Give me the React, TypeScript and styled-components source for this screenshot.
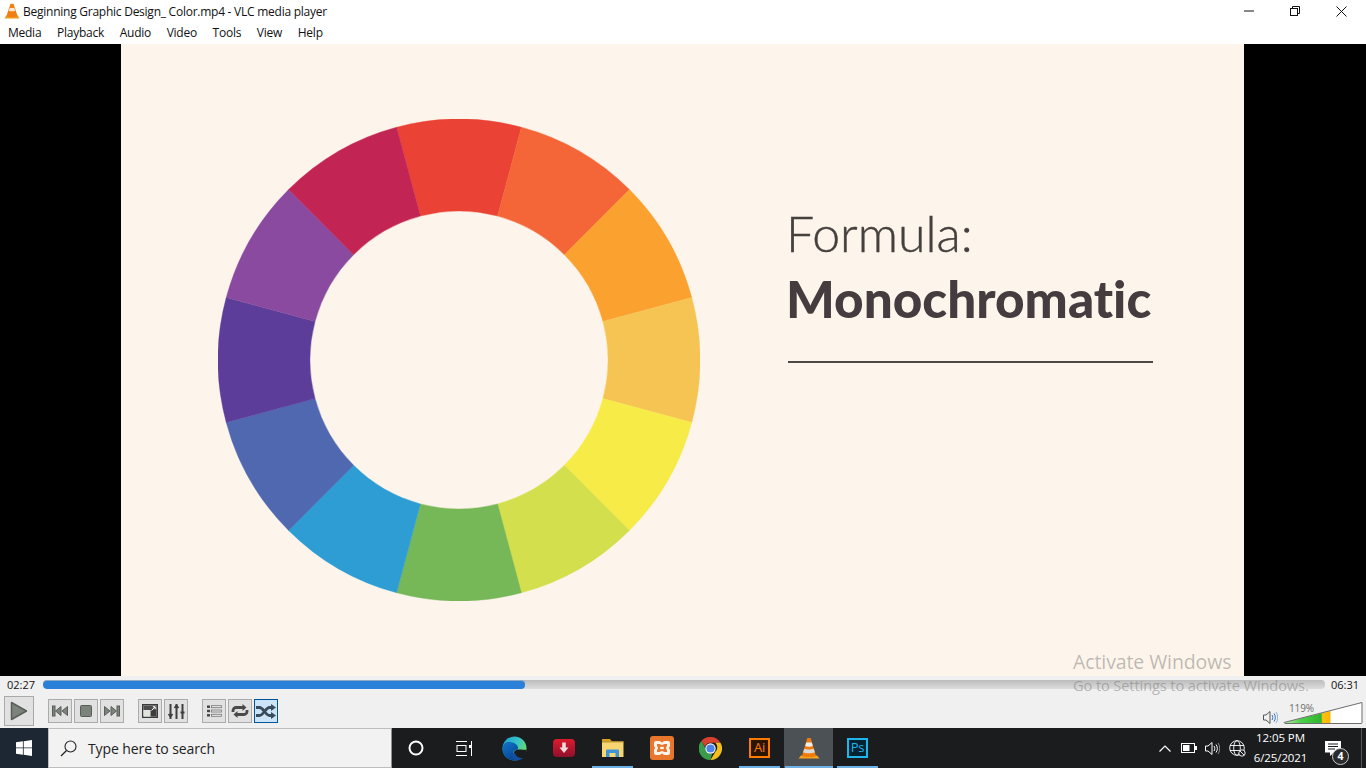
import React from 'react'
import styled, { createGlobalStyle } from 'styled-components'

const GlobalStyle = createGlobalStyle`
  html, body { margin: 0; padding: 0; background: #000; }
  * { box-sizing: border-box; }
  body { font-family: "Open Sans", "Liberation Sans", sans-serif; }
`

const Application = styled.div`
  position: relative;
  width: 1366px;
  height: 768px;
  display: flex;
  flex-direction: column;
  overflow: hidden;
`

const TitleBar = styled.div`
  height: 22px;
  background: #fff;
  display: flex;
  align-items: center;
  padding: 0 2px 0 4px;
  font-size: 12px;
  color: #111;
`
const TitleText = styled.span`
  margin-left: 3px;
  letter-spacing: -0.25px;
  white-space: nowrap;
  flex: 1;
`
const WinButton = styled.div`
  width: 46px;
  height: 22px;
  display: flex;
  align-items: center;
  justify-content: center;
`
const MenuBar = styled.div`
  height: 22px;
  background: #fff;
  display: flex;
  align-items: center;
  gap: 15.7px;
  padding: 0 0 2px 8px;
  font-size: 12px;
  color: #111;
  letter-spacing: -0.25px;
`

const Video = styled.div`
  height: 632px;
  background: #000;
  display: flex;
  padding-left: 121px;
`
const Slide = styled.div`
  width: 1123px;
  background: #fdf5eb;
  display: flex;
  align-items: center;
  padding-left: 97px;
`
const SlideText = styled.div`
  margin-left: 86px;
  width: 366px;
  align-self: flex-start;
  padding-top: 159px;
  font-family: Lato, sans-serif;
  font-variant-ligatures: none;
  color: #48413f;
`
const FormulaLine = styled.div`
  font-size: 50px;
  font-weight: 300;
  line-height: 60px;
  color: #45403e;
  -webkit-text-stroke: 0.4px #45403e;
`
const BoldLine = styled.div`
  font-size: 51.3px;
  font-weight: 900;
  line-height: 62px;
  margin-top: 4px;
  color: #443c3e;
  white-space: nowrap;
`
const Rule = styled.div`
  height: 2px;
  margin: 32px 0 0 2px;
  width: 365px;
  background: #4b4845;
`

const Watermark = styled.div`
  position: absolute;
  left: 1073px;
  top: 649px;
  color: rgba(110, 110, 110, 0.45);
  pointer-events: none;
`
const WatermarkTitle = styled.div`
  font-size: 19.5px;
  line-height: 26px;
  letter-spacing: -0.1px;
`
const WatermarkSub = styled.div`
  font-size: 14.6px;
  line-height: 20px;
  letter-spacing: -0.1px;
  white-space: nowrap;
`

const SeekRow = styled.div`
  height: 20px;
  background: #f0f0f0;
  display: flex;
  align-items: center;
  padding: 0 7px 3px;
  font-size: 11px;
  color: #111;
`
const Track = styled.div`
  flex: 1;
  height: 9px;
  margin: 0 6px 0 8px;
  border-radius: 4px;
  background: linear-gradient(#bcbcbc, #dcdcdc);
  overflow: hidden;
`
const TrackFill = styled.div`
  height: 100%;
  background: #2a80d8;
  border-top: 1px solid #8fa9c4;
  border-radius: 4px;
`

const Controls = styled.div`
  height: 32px;
  background: #f0f0f0;
  display: flex;
  align-items: flex-start;
  padding-left: 4px;
`
const PlayButton = styled.div`
  width: 30px;
  height: 30px;
  border: 1px solid #a9a9a9;
  background: #e1e1e1;
  display: flex;
  align-items: center;
  justify-content: center;
`
const ButtonGroup = styled.div<{ $gap: number }>`
  display: flex;
  gap: 2px;
  margin: 3px 0 0 ${p => p.$gap}px;
`
const SmallButton = styled.div<{ $on?: boolean }>`
  width: 24px;
  height: 24px;
  border: 1px solid ${p => (p.$on ? '#005499' : '#ababab')};
  background: ${p => (p.$on ? '#cce4f7' : '#e1e1e1')};
  display: flex;
  align-items: center;
  justify-content: center;
`
const Volume = styled.div`
  margin-left: auto;
  margin-right: 3px;
  display: flex;
  align-items: flex-end;
  height: 29px;
  gap: 5px;
`
const VolumeBar = styled.div`
  position: relative;
  width: 80px;
  height: 24px;
`
const VolumeLabel = styled.span`
  position: absolute;
  left: 6px;
  top: 0;
  font-size: 10px;
  letter-spacing: -0.1px;
  color: #6e6e6e;
`

const Taskbar = styled.div`
  height: 40px;
  background: #1b1c1e;
  display: flex;
  align-items: stretch;
  color: #fff;
`
const StartButton = styled.div`
  width: 48px;
  background: #1c2733;
  display: flex;
  align-items: center;
  justify-content: center;
`
const SearchBox = styled.div`
  width: 344px;
  background: #f2f2f2;
  border: 1px solid #bdbdbd;
  border-right-color: #8f8f8f;
  display: flex;
  align-items: center;
  padding-left: 11px;
  gap: 11px;
  font-size: 14px;
  letter-spacing: -0.1px;
  color: #222;
`
const TaskCell = styled.div<{ $width?: number; $active?: boolean; $running?: boolean }>`
  position: relative;
  width: ${p => p.$width ?? 49}px;
  background: ${p => (p.$active ? '#4c5156' : 'transparent')};
  display: flex;
  align-items: center;
  justify-content: center;
  &::after {
    content: '';
    display: ${p => (p.$running ? 'block' : 'none')};
    position: absolute;
    left: ${p => (p.$active ? 1 : 4)}px;
    right: ${p => (p.$active ? 0 : 4)}px;
    bottom: 0;
    height: 2px;
    background: #6cb2e6;
  }
`
const TaskSpacer = styled.div`
  width: 2px;
`
const AppTile = styled.div<{ $color: string; $bg: string }>`
  width: 21px;
  height: 20px;
  border: 2px solid ${p => p.$color};
  background: ${p => p.$bg};
  color: ${p => p.$color};
  display: flex;
  align-items: center;
  justify-content: center;
  font-family: "Open Sans", sans-serif;
  font-size: 13px;
  line-height: 1;
  letter-spacing: -0.2px;
  padding-bottom: 1px;
`
const Tray = styled.div`
  margin-left: auto;
  display: flex;
  align-items: center;
`
const TrayCell = styled.div<{ $width: number }>`
  width: ${p => p.$width}px;
  height: 40px;
  display: flex;
  align-items: center;
  justify-content: center;
`
const Clock = styled.div`
  width: 61px;
  text-align: center;
  font-size: 11.5px;
  line-height: 20px;
  letter-spacing: -0.1px;
  white-space: nowrap;
`
const NotifyCell = styled.div`
  position: relative;
  width: 50px;
  height: 40px;
  padding-right: 6px;
  display: flex;
  align-items: center;
  justify-content: center;
`
const NotifyBadge = styled.span`
  position: absolute;
  left: 21px;
  top: 20px;
  width: 17px;
  height: 17px;
  border-radius: 50%;
  border: 1px solid #c9c9c9;
  background: #2b2b2d;
  color: #fff;
  font-size: 10.5px;
  font-weight: 700;
  line-height: 15px;
  text-align: center;
`
const ShowDesktop = styled.div`
  width: 5px;
  height: 40px;
  border-left: 1px solid #55585b;
`

const wheelColors = [
  '#ea4335', '#f46638', '#fba130', '#f6c453', '#f6eb47', '#d3df4c',
  '#76b757', '#2e9dd4', '#4f68b0', '#5c3d99', '#8a4a9f', '#c22553',
]

function wedge(i: number) {
  const c = 241
  const R = 241
  const r = 149
  const a0 = ((i * 30 - 15 - 90) * Math.PI) / 180
  const a1 = ((i * 30 + 15 - 90) * Math.PI) / 180
  const pt = (rad: number, a: number) => `${c + rad * Math.cos(a)} ${c + rad * Math.sin(a)}`
  return `M${pt(R, a0)}A${R} ${R} 0 0 1 ${pt(R, a1)}L${pt(r, a1)}A${r} ${r} 0 0 0 ${pt(r, a0)}Z`
}

const Wheel = () => (
  <svg width="482" height="482" viewBox="0 0 482 482" style={{ flex: 'none' }}>
    {wheelColors.map((color, i) => (
      <path key={color} d={wedge(i)} fill={color} stroke={color} strokeWidth="0.4" />
    ))}
  </svg>
)

const Cone = () => (
  <svg width="22" height="22" viewBox="0 0 22 22">
    <path d="M0.500 21.500 3 18.500h16l2.500 3z" fill="#f9a11b" />
    <path d="M9.300 1h3.400L18 19c-3 1.400-11 1.400-14 0z" fill="#f07a0c" />
    <path d="M8.300 5.400h5.400l1.100 3.700c-2 .9-5.600.9-7.600 0z" fill="#eeeeee" />
    <path d="M6.200 11.800c2.300.9 7.300.9 9.600 0l1.100 3.700c-3 1-8.800 1-11.800 0z" fill="#d9d9d9" />
  </svg>
)

const MiniCone = () => (
  <svg width="16" height="16" viewBox="0 0 16 16">
    <path d="M0.500 15.500 2.200 12.500h11.600l1.700 3z" fill="#f29a1f" />
    <path d="M6.500 0.800h3L13.600 13.200c-2.500 1.300-8.700 1.300-11.200 0z" fill="#ef7f14" />
    <path d="M5.800 5h4.400l1 2.800c-1.700.7-4.700.7-6.400 0z" fill="#f6e9da" />
  </svg>
)

const C = { fill: '#7b837b', stroke: '#5a5e5a' }

const IconPlay = () => (
  <svg width="18" height="20" viewBox="0 0 18 20">
    <path d="M1.500 1.500v17l15-8.500z" fill={C.fill} stroke={C.stroke} strokeWidth="1.500" strokeLinejoin="round" />
  </svg>
)
const IconPrev = () => (
  <svg width="16" height="12" viewBox="0 0 16 12">
    <rect x="0.500" y="1" width="2.500" height="10" fill={C.fill} stroke={C.stroke} />
    <path d="M9 1.500v9L3.500 6zM15.500 1.500v9L10 6z" fill={C.fill} stroke={C.stroke} strokeLinejoin="round" />
  </svg>
)
const IconNext = () => (
  <svg width="16" height="12" viewBox="0 0 16 12">
    <rect x="13" y="1" width="2.500" height="10" fill={C.fill} stroke={C.stroke} />
    <path d="M0.500 1.500v9L6 6zM7 1.500v9L12.500 6z" fill={C.fill} stroke={C.stroke} strokeLinejoin="round" />
  </svg>
)
const IconStop = () => (
  <svg width="12" height="12" viewBox="0 0 12 12">
    <rect x="0.500" y="0.500" width="11" height="11" rx="1" fill={C.fill} stroke={C.stroke} />
  </svg>
)
const IconFrame = () => (
  <svg width="16" height="14" viewBox="0 0 16 14">
    <rect x="0.750" y="0.750" width="14.500" height="12.500" fill="#fff" stroke="#3a3a3a" strokeWidth="1.500" />
    <rect x="1.500" y="1.500" width="13" height="4.500" fill="#4a4a4a" />
    <rect x="1.500" y="6" width="7" height="6.500" fill="#dfe5dc" />
    <rect x="8.500" y="6" width="6" height="6.500" fill="#3d3d3d" />
    <path d="M9.500 6.500 13 3M10.800 2.800H13.200v2.400" stroke="#fff" fill="none" />
  </svg>
)
const IconEq = () => (
  <svg width="17" height="17" viewBox="0 0 17 17" fill="none" stroke="#3f3f3f" strokeWidth="2">
    <path d="M2.500 1v15M8.500 1v15M14.500 1v15" />
    <path d="M.5 11l2 2.500 2-2.500M6.500 5l2-2.500 2 2.500M12.500 9.500h4" strokeWidth="1.800" />
  </svg>
)
const IconList = () => (
  <svg width="15" height="12" viewBox="0 0 15 12">
    <g fill="#444">
      <rect x="0" y="0.500" width="3" height="2.400" />
      <rect x="0" y="4.800" width="3" height="2.400" />
      <rect x="0" y="9.100" width="3" height="2.400" />
    </g>
    <g fill="#e8e8e8" stroke="#777" strokeWidth="0.800">
      <rect x="4.500" y="0.700" width="10" height="2" />
      <rect x="4.500" y="5" width="10" height="2" />
      <rect x="4.500" y="9.300" width="10" height="2" />
    </g>
  </svg>
)
const IconLoop = () => (
  <svg width="18" height="14" viewBox="0 0 18 14" fill="none" stroke="#4a4a4a" strokeWidth="2.800">
    <path d="M2 8V6.500a3 3 0 0 1 3-3h7" />
    <path d="M16 6v1.500a3 3 0 0 1-3 3H6" />
    <path d="M11.500 0l4 3.500-4 3.500z" fill="#4a4a4a" stroke="none" />
    <path d="M6.500 7l-4 3.500 4 3.500z" fill="#4a4a4a" stroke="none" />
  </svg>
)
const IconShuffle = () => (
  <svg width="20" height="15" viewBox="0 0 20 15" fill="none" stroke="#3a4c5a" strokeWidth="2.800">
    <path d="M0 3.500h3.500c4 0 6 8 10 8H16" />
    <path d="M0 11.500h3.500c4 0 6-8 10-8H16" />
    <path d="M15 0l5 3.500-5 3.500zM15 8l5 3.500-5 3.500z" fill="#3a4c5a" stroke="none" />
  </svg>
)
const IconSpeaker = ({ color, wave }: { color: string; wave: string }) => (
  <svg width="15" height="15" viewBox="0 0 15 15" fill="none">
    <path d="M.500 5h2.500L7 1.500v12L3 10H.500z" stroke={color} />
    <path d="M9 5c1 1.500 1 3.500 0 5M11 3.500c1.800 2.500 1.800 5.500 0 8" stroke={wave} />
    <path d="M13 2c2.200 3.200 2.200 7.800 0 11" stroke={wave} opacity="0.500" />
  </svg>
)
const VolumeWedge = () => (
  <svg width="80" height="24" viewBox="0 0 80 24">
    <defs>
      <linearGradient id="vol" x1="0" x2="1" y1="0" y2="0">
        <stop offset="0" stopColor="#c5eeb5" />
        <stop offset="0.350" stopColor="#4fd04b" />
        <stop offset="0.800" stopColor="#2fb52e" />
        <stop offset="0.830" stopColor="#ffc20e" />
        <stop offset="1" stopColor="#ffb300" />
      </linearGradient>
    </defs>
    <path d="M1 21.500 79 1.500v21H2z" fill="#fff" />
    <path d="M1 21.500 47.500 10v12.500H2z" fill="url(#vol)" />
    <path d="M1 21.500 79 1.500v20.500l-.5.500H2z" fill="none" stroke="#6e6e6e" />
  </svg>
)

const IconWindows = () => (
  <svg width="16" height="16" viewBox="0 0 16 16" fill="#fff">
    <path d="M0 2.300 6.900 1.300v6.200H0zM7.700 1.200 16 0v7.500H7.700zM0 8.300h6.900v6.400L0 13.700zM7.700 8.300H16V16l-8.300-1.200z" />
  </svg>
)
const IconSearch = () => (
  <svg width="17" height="17" viewBox="0 0 17 17" fill="none" stroke="#222" strokeWidth="1.100">
    <circle cx="10.500" cy="6.500" r="5.500" />
    <path d="M6.500 10.500 1 16" strokeWidth="1.300" />
  </svg>
)
const IconCortana = () => (
  <svg width="16" height="16" viewBox="0 0 16 16" fill="none" stroke="#fff" strokeWidth="2">
    <circle cx="8" cy="8" r="6.500" />
  </svg>
)
const IconTaskView = () => (
  <svg width="16" height="15" viewBox="0 0 16 15" fill="none" stroke="#fff">
    <path d="M0 .500h11M0 14.500h11" />
    <rect x="1" y="4.500" width="9" height="6" />
    <path d="M15.500 0v15" />
    <rect x="13" y="4" width="3" height="3" fill="#fff" stroke="none" />
  </svg>
)
const IconEdge = () => (
  <svg width="25" height="25" viewBox="0 0 25 25">
    <defs>
      <linearGradient id="edgeTop" x1="0" y1="0" x2="1" y2="0.600">
        <stop offset="0" stopColor="#1a9ad6" />
        <stop offset="0.550" stopColor="#36c4c8" />
        <stop offset="1" stopColor="#6fdc62" />
      </linearGradient>
      <linearGradient id="edgeLow" x1="0" y1="0" x2="0.700" y2="1">
        <stop offset="0" stopColor="#0f76c8" />
        <stop offset="1" stopColor="#0a3f8c" />
      </linearGradient>
    </defs>
    <circle cx="12.500" cy="12.500" r="12" fill="url(#edgeTop)" />
    <path d="M.500 13C1 5 8 5 13 7.500c3.500 2 3.500 5 2.500 6-3 .500-5.500 2-4 5.500 1.500 3.500 7 4.500 9.500 2.500C18 25 12 25.500 7.500 23.500 3 21.500.5 17.500.5 13z" fill="url(#edgeLow)" />
    <path d="M15.500 13.500c3 0 9 .500 9 0 0 4-1.500 6.500-3.500 8.500-3 1.500-7.500 1-9-2-1.500-3.500.500-5.500 3.500-6.500z" fill="#1b1c1e" />
    <path d="M13 17c.500 3 3.500 5 8 5-2.500 2.200-6.500 2.800-9 1.500-2.800-1.500-1-6-1-6.500z" fill="#124f9e" />
  </svg>
)
const IconRed = () => (
  <svg width="22" height="18" viewBox="0 0 22 18">
    <defs>
      <linearGradient id="redTile" x1="0" x2="0" y1="0" y2="1">
        <stop offset="0" stopColor="#dd1b2c" />
        <stop offset="1" stopColor="#8f0f2c" />
      </linearGradient>
    </defs>
    <rect width="22" height="18" rx="4" fill="url(#redTile)" />
    <path d="M9.200 3.500h3.600v5h2.700L11 14 6.500 8.500h2.700z" fill="#f1dcdc" />
  </svg>
)
const IconFolder = () => (
  <svg width="23" height="20" viewBox="0 0 23 20">
    <path d="M1 1h8l2 2.500H1z" fill="#d9a21b" />
    <path d="M1 3.500h21.500V19H1z" fill="#f8d672" />
    <path d="M1 3.500h21.500v1H1z" fill="#c99a22" />
    <path d="M5 19v-6.500a1 1 0 0 1 1-1h11a1 1 0 0 1 1 1V19h-3.500v-4h-6v4z" fill="#3f94d8" />
  </svg>
)
const IconXampp = () => (
  <svg width="24" height="24" viewBox="0 0 24 24">
    <rect width="24" height="24" rx="3" fill="#e8762c" />
    <path d="M6 5h3.500c1.500 0 1.500 1.500 2.500 1.500S13 5 14.500 5H18a2 2 0 0 1 2 2v3c0 1.200-1.200 1.200-1.200 2s1.200.8 1.200 2v3a2 2 0 0 1-2 2h-3.500c-1.500 0-1.500-1.500-2.500-1.500S11 19 9.500 19H6a2 2 0 0 1-2-2v-3c0-1.200 1.200-1.200 1.200-2S4 10.800 4 10V7a2 2 0 0 1 2-2z" fill="#fff3ea" />
    <path d="M7 8h2.500c1 0 1.300 1 2.500 1s1.500-1 2.500-1H17v1.500c0 1-1 1.300-1 2.500s1 1.500 1 2.500V16h-2.500c-1 0-1.300-1-2.500-1s-1.500 1-2.500 1H7v-1.500c0-1 1-1.300 1-2.500s-1-1.500-1-2.500z" fill="#e8762c" />
    <rect x="10.200" y="10.800" width="3.600" height="2.400" fill="#fff3ea" />
  </svg>
)
const IconChrome = () => (
  <svg width="23" height="23" viewBox="0 0 24 24">
    <path d="M12 0a12 12 0 0 1 10.400 6H12a6 6 0 0 0-5.700 4.100L2.500 4.300A12 12 0 0 1 12 0z" fill="#d9412f" />
    <path d="M22.400 6A12 12 0 0 1 12 24l5.200-9a6 6 0 0 0-.3-9z" fill="#f2c01c" />
    <path d="M12 24A12 12 0 0 1 2.500 4.300l5 8.700a6 6 0 0 0 6.200 4.800z" fill="#3a9c4a" />
    <circle cx="12" cy="12" r="5.400" fill="#fff" />
    <circle cx="12" cy="12" r="4.300" fill="#4c85ec" />
  </svg>
)
const IconChevron = () => (
  <svg width="12" height="7" viewBox="0 0 12 7" fill="none" stroke="#fff" strokeWidth="1.200">
    <path d="M.500 6.500 6 1l5.500 5.500" />
  </svg>
)
const IconBattery = () => (
  <svg width="16" height="10" viewBox="0 0 16 10">
    <rect x="0.500" y="0.500" width="13" height="9" fill="none" stroke="#fff" />
    <rect x="2" y="2" width="6.500" height="6" fill="#fff" />
    <rect x="14" y="3" width="2" height="4" fill="#fff" />
  </svg>
)
const IconGlobe = () => (
  <svg width="17" height="17" viewBox="0 0 17 17" fill="none" stroke="#fff" strokeWidth="0.900">
    <circle cx="8" cy="8" r="7.300" />
    <ellipse cx="8" cy="8" rx="3.300" ry="7.300" />
    <path d="M1 5.500h14M1 10.500h14" />
    <circle cx="13" cy="13" r="3.200" fill="#1b1c1e" />
    <path d="M11 11l4 4" />
  </svg>
)
const IconNotify = () => (
  <svg width="16" height="15" viewBox="0 0 16 15">
    <path d="M0 0h16v11.500H9L5 15v-3.500H0z" fill="#fff" />
    <path d="M3 3h10M3 5.500h10M3 8h7" stroke="#1b1c1e" />
  </svg>
)

function App() {
  return (
    <Application>
      <GlobalStyle />
      <TitleBar>
        <MiniCone />
        <TitleText>Beginning Graphic Design_ Color.mp4 - VLC media player</TitleText>
        <WinButton>
          <svg width="10" height="10" viewBox="0 0 10 10"><path d="M0 5h10" stroke="#111" /></svg>
        </WinButton>
        <WinButton>
          <svg width="10" height="10" viewBox="0 0 10 10" fill="none" stroke="#111">
            <rect x="0.500" y="2.500" width="7" height="7" />
            <path d="M2.500 2.500v-2h7v7h-2" />
          </svg>
        </WinButton>
        <WinButton>
          <svg width="11" height="11" viewBox="0 0 11 11" stroke="#111"><path d="M.500.500l10 10M10.500.500l-10 10" /></svg>
        </WinButton>
      </TitleBar>
      <MenuBar>
        {['Media', 'Playback', 'Audio', 'Video', 'Tools', 'View', 'Help'].map(item => (
          <span key={item}>{item}</span>
        ))}
      </MenuBar>

      <Video>
        <Slide>
          <Wheel />
          <SlideText>
            <FormulaLine>Formula:</FormulaLine>
            <BoldLine>Monochromatic</BoldLine>
            <Rule />
          </SlideText>
        </Slide>
      </Video>

      <SeekRow>
        <span>02:27</span>
        <Track>
          <TrackFill style={{ width: `${(147 / 391) * 100}%` }} />
        </Track>
        <span>06:31</span>
      </SeekRow>

      <Controls>
        <PlayButton><IconPlay /></PlayButton>
        <ButtonGroup $gap={14}>
          <SmallButton><IconPrev /></SmallButton>
          <SmallButton><IconStop /></SmallButton>
          <SmallButton><IconNext /></SmallButton>
        </ButtonGroup>
        <ButtonGroup $gap={14}>
          <SmallButton><IconFrame /></SmallButton>
          <SmallButton><IconEq /></SmallButton>
        </ButtonGroup>
        <ButtonGroup $gap={14}>
          <SmallButton><IconList /></SmallButton>
          <SmallButton><IconLoop /></SmallButton>
          <SmallButton $on><IconShuffle /></SmallButton>
        </ButtonGroup>
        <Volume>
          <IconSpeaker color="#555" wave="#2b6fc4" />
          <VolumeBar>
            <VolumeLabel>119%</VolumeLabel>
            <VolumeWedge />
          </VolumeBar>
        </Volume>
      </Controls>

      <Taskbar>
        <StartButton><IconWindows /></StartButton>
        <SearchBox>
          <IconSearch />
          <span>Type here to search</span>
        </SearchBox>
        <TaskCell $width={48}><IconCortana /></TaskCell>
        <TaskCell $width={48}><IconTaskView /></TaskCell>
        <TaskSpacer />
        <TaskCell><IconEdge /></TaskCell>
        <TaskCell><IconRed /></TaskCell>
        <TaskCell $running><IconFolder /></TaskCell>
        <TaskCell><IconXampp /></TaskCell>
        <TaskCell><IconChrome /></TaskCell>
        <TaskCell $running><AppTile $color="#ff7b00" $bg="#2a1403">Ai</AppTile></TaskCell>
        <TaskCell $running $active><Cone /></TaskCell>
        <TaskCell $running><AppTile $color="#1fb6ee" $bg="#04222f">Ps</AppTile></TaskCell>
        <Tray>
          <TrayCell $width={24}><IconChevron /></TrayCell>
          <TrayCell $width={24}><IconBattery /></TrayCell>
          <TrayCell $width={23}><IconSpeaker color="#fff" wave="#fff" /></TrayCell>
          <TrayCell $width={26}><IconGlobe /></TrayCell>
          <Clock>
            <div>12:05 PM</div>
            <div>6/25/2021</div>
          </Clock>
          <NotifyCell>
            <IconNotify />
            <NotifyBadge>4</NotifyBadge>
          </NotifyCell>
          <ShowDesktop />
        </Tray>
      </Taskbar>

      <Watermark>
        <WatermarkTitle>Activate Windows</WatermarkTitle>
        <WatermarkSub>Go to Settings to activate Windows.</WatermarkSub>
      </Watermark>
    </Application>
  )
}

export default App
